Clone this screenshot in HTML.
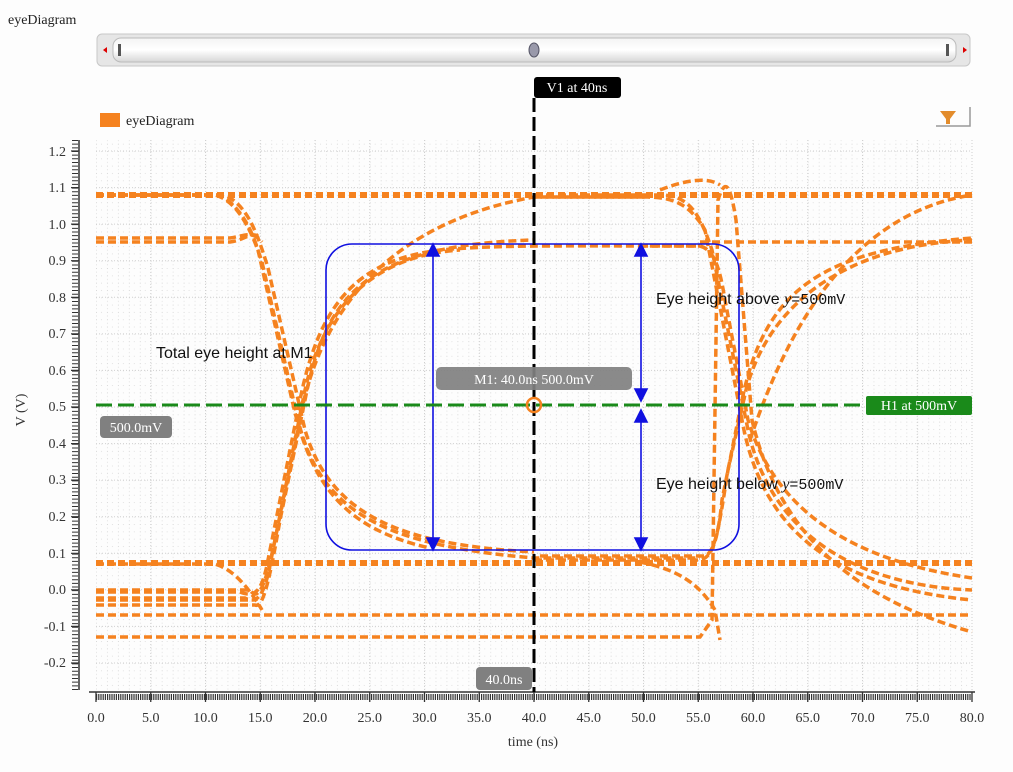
<!DOCTYPE html>
<html><head><meta charset="utf-8"><style>
html,body{margin:0;padding:0;background:#fdfdfd;width:1013px;height:772px;overflow:hidden}
svg{display:block}
</style></head><body>
<svg width="1013" height="772" viewBox="0 0 1013 772" xmlns="http://www.w3.org/2000/svg" font-family="Liberation Serif, serif">
<defs>
<linearGradient id="sb" x1="0" y1="0" x2="0" y2="1"><stop offset="0" stop-color="#f4f4f4"/><stop offset=".5" stop-color="#ffffff"/><stop offset="1" stop-color="#d6d6d6"/></linearGradient>
<pattern id="minor" width="10.95" height="7.314" patternUnits="userSpaceOnUse" x="96" y="151">
<rect x="0" y="0" width="1" height="1" fill="#d8d8d8"/><rect x="0" y="3.6" width="1" height="1" fill="#e2e2e2"/><rect x="5" y="0" width="1" height="1" fill="#e2e2e2"/>
</pattern>
</defs>
<text x="8" y="24" font-size="14" fill="#222">eyeDiagram</text>
<rect x="97" y="34" width="873" height="32" rx="5" fill="#e6e6e6" stroke="#c8c8c8"/>
<rect x="113" y="38" width="843" height="24" rx="8" fill="url(#sb)" stroke="#bbb"/>
<polygon points="103,50 107,47 107,53" fill="#d00"/><polygon points="967,50 963,47 963,53" fill="#d00"/>
<rect x="118" y="44" width="3" height="12" fill="#555"/><rect x="946" y="44" width="3" height="12" fill="#555"/>
<ellipse cx="534" cy="50" rx="5" ry="7" fill="#99a" stroke="#556"/>
<rect x="100" y="113" width="20" height="14" fill="#f5821f"/>
<text x="126" y="125" font-size="14" fill="#222">eyeDiagram</text>
<polygon points="940,111 956,111 950,119 950,124 946,124 946,119" fill="#e38c2c"/>
<path d="M936,126 H970 V107" stroke="#999" stroke-width="1.5" fill="none"/>
<rect x="96" y="140" width="876" height="550" fill="url(#minor)"/>
<g stroke="#d0d0d0" stroke-dasharray="1 2" stroke-width="1">
<path d="M96,151H972M96,187.6H972M96,224.1H972M96,260.7H972M96,297.3H972M96,333.9H972M96,370.4H972M96,407H972M96,443.6H972M96,480.1H972M96,516.7H972M96,553.3H972M96,589.8H972M96,626.4H972M96,663H972"/>
<path d="M150.75,140V690M205.5,140V690M260.25,140V690M315,140V690M369.75,140V690M424.5,140V690M479.25,140V690M588.75,140V690M643.5,140V690M698.25,140V690M753,140V690M807.75,140V690M862.5,140V690M917.25,140V690M972,140V690"/>
</g>
<path d="M79,140V690" stroke="#333" stroke-width="1.5"/>
<g stroke="#333" stroke-width="1.2">
<path d="M71,151H79M71,187.6H79M71,224.1H79M71,260.7H79M71,297.3H79M71,333.9H79M71,370.4H79M71,407H79M71,443.6H79M71,480.1H79M71,516.7H79M71,553.3H79M71,589.8H79M71,626.4H79M71,663H79"/>
</g>
<path d="M75,140V690" stroke="#333" stroke-width="6" stroke-dasharray="1 2.66" fill="none"/>
<path d="M89,692H975" stroke="#333" stroke-width="1.5"/>
<path d="M96,697H972" stroke="#333" stroke-width="6" stroke-dasharray="1.2 1" fill="none"/>
<g stroke="#333" stroke-width="1.3">
<path d="M96,692V702M150.75,692V702M205.5,692V702M260.25,692V702M315,692V702M369.75,692V702M424.5,692V702M479.25,692V702M534,692V702M588.75,692V702M643.5,692V702M698.25,692V702M753,692V702M807.75,692V702M862.5,692V702M917.25,692V702M972,692V702"/>
</g>
<g font-size="14" fill="#333" text-anchor="end">
<text x="66" y="156">1.2</text><text x="66" y="192">1.1</text><text x="66" y="229">1.0</text><text x="66" y="265">0.9</text><text x="66" y="302">0.8</text><text x="66" y="338">0.7</text><text x="66" y="375">0.6</text><text x="66" y="411">0.5</text><text x="66" y="448">0.4</text><text x="66" y="484">0.3</text><text x="66" y="521">0.2</text><text x="66" y="558">0.1</text><text x="66" y="594">0.0</text><text x="66" y="631">-0.1</text><text x="66" y="667">-0.2</text>
</g>
<g font-size="14" fill="#333" text-anchor="middle">
<text x="96" y="722">0.0</text><text x="150.75" y="722">5.0</text><text x="205.5" y="722">10.0</text><text x="260.25" y="722">15.0</text><text x="315" y="722">20.0</text><text x="369.75" y="722">25.0</text><text x="424.5" y="722">30.0</text><text x="479.25" y="722">35.0</text><text x="534" y="722">40.0</text><text x="588.75" y="722">45.0</text><text x="643.5" y="722">50.0</text><text x="698.25" y="722">55.0</text><text x="753" y="722">60.0</text><text x="807.75" y="722">65.0</text><text x="862.5" y="722">70.0</text><text x="917.25" y="722">75.0</text><text x="972" y="722">80.0</text>
<text x="533" y="746">time (ns)</text>
</g>
<text x="0" y="0" font-size="14" fill="#333" text-anchor="middle" transform="translate(25,410) rotate(-90)">V (V)</text>
<g fill="none" stroke="#f5821f" stroke-width="3.5" stroke-dasharray="8 4" stroke-linecap="butt">
<path d="M96,195H972" stroke-width="6" stroke-dasharray="7 4"/>
<path d="M96,563H972" stroke-width="6" stroke-dasharray="7 4"/>
<path d="M96,615H972"/>
<path d="M96,600H250"/>
<path d="M96,242H230C245,240 250,232 258,236"/>
<path d="M96,238H230C245,236 252,230 262,242"/>
<path d="M96,195H215C235,200 250,225 262,262L298,420C320,510 380,545 534,558H700"/>
<path d="M96,195H225C245,205 255,225 268,268L305,430C330,515 400,545 534,552"/>
<path d="M96,195H220C238,205 250,225 258,250L292,400C310,480 340,528 430,548"/>
<path d="M96,592H240C255,598 262,592 268,560L300,400C320,300 360,260 440,250C500,245 530,246 700,246"/>
<path d="M96,598H245C258,605 265,595 272,555L305,390C325,300 380,255 460,250"/>
<path d="M96,590H250C258,602 265,588 275,540L298,430C315,320 380,225 534,197H650"/>
<path d="M96,605H255C262,608 268,590 280,520L305,400C325,300 360,245 534,240"/>
<path d="M96,564H215C235,570 250,590 262,610"/>
<path d="M534,197H650C675,198 690,205 705,230L742,420C760,520 820,585 972,600"/>
<path d="M534,195H660C690,195 700,215 712,250L748,430C770,530 850,585 972,590"/>
<path d="M534,560H700C712,558 718,540 722,500L742,400C765,290 820,250 972,238"/>
<path d="M540,556H705C716,552 720,520 728,470L746,390C770,300 850,245 972,240"/>
<path d="M640,246H700C715,250 720,270 725,300L748,420C775,510 850,560 972,578"/>
<path d="M700,242H972"/>
<path d="M96,637H700L712,620L718,200C725,178 730,182 736,220L752,420C780,540 860,600 972,632"/>
<path d="M640,562C680,570 700,585 715,610L720,640"/>
<path d="M660,190C690,178 710,178 720,185"/>
<path d="M750,440C780,350 840,215 972,195"/>
</g>
<rect x="326" y="244" width="413" height="306" rx="26" fill="none" stroke="#1010e0" stroke-width="1.6"/>
<g stroke="#1010e0" stroke-width="1.6" fill="#1010e0">
<path d="M433,252V542"/><polygon points="433,244 427,256 439,256"/><polygon points="433,550 427,538 439,538"/>
<path d="M641,252V392"/><polygon points="641,244 635,256 647,256"/><polygon points="641,401 635,389 647,389"/>
<path d="M641,418V542"/><polygon points="641,410 635,422 647,422"/><polygon points="641,550 635,538 647,538"/>
</g>
<path d="M96,405H866" stroke="#1a8a1a" stroke-width="3" stroke-dasharray="16 6"/>
<rect x="866" y="396" width="106" height="19" rx="2" fill="#1a8a1a"/>
<text x="919" y="410" font-size="14" fill="#fff" text-anchor="middle">H1 at 500mV</text>
<path d="M534,98V692" stroke="#000" stroke-width="3" stroke-dasharray="14 5"/>
<rect x="534" y="77" width="87" height="21" rx="3" fill="#000"/>
<text x="577" y="92" font-size="14" fill="#fff" text-anchor="middle">V1 at 40ns</text>
<rect x="476" y="667" width="56" height="23" rx="4" fill="#808080"/>
<text x="504" y="684" font-size="14" fill="#fff" text-anchor="middle">40.0ns</text>
<rect x="100" y="416" width="72" height="22" rx="4" fill="#808080"/>
<text x="136" y="432" font-size="14" fill="#fff" text-anchor="middle">500.0mV</text>
<rect x="436" y="367" width="196" height="23" rx="5" fill="#808080" opacity=".92"/>
<text x="534" y="384" font-size="14" fill="#fff" text-anchor="middle">M1: 40.0ns 500.0mV</text>
<circle cx="534" cy="405" r="7" fill="none" stroke="#f5821f" stroke-width="2.5"/>
<g font-family="Liberation Sans, sans-serif" font-size="16" fill="#111">
<text x="156" y="358">Total eye height at M1</text>
<text x="656" y="304">Eye height above <tspan font-family="Liberation Serif, serif" font-style="italic">y</tspan><tspan font-family="Liberation Mono, monospace" font-size="15">=500mV</tspan></text>
<text x="656" y="489">Eye height below <tspan font-family="Liberation Serif, serif" font-style="italic">y</tspan><tspan font-family="Liberation Mono, monospace" font-size="15">=500mV</tspan></text>
</g>
</svg>
</body></html>
